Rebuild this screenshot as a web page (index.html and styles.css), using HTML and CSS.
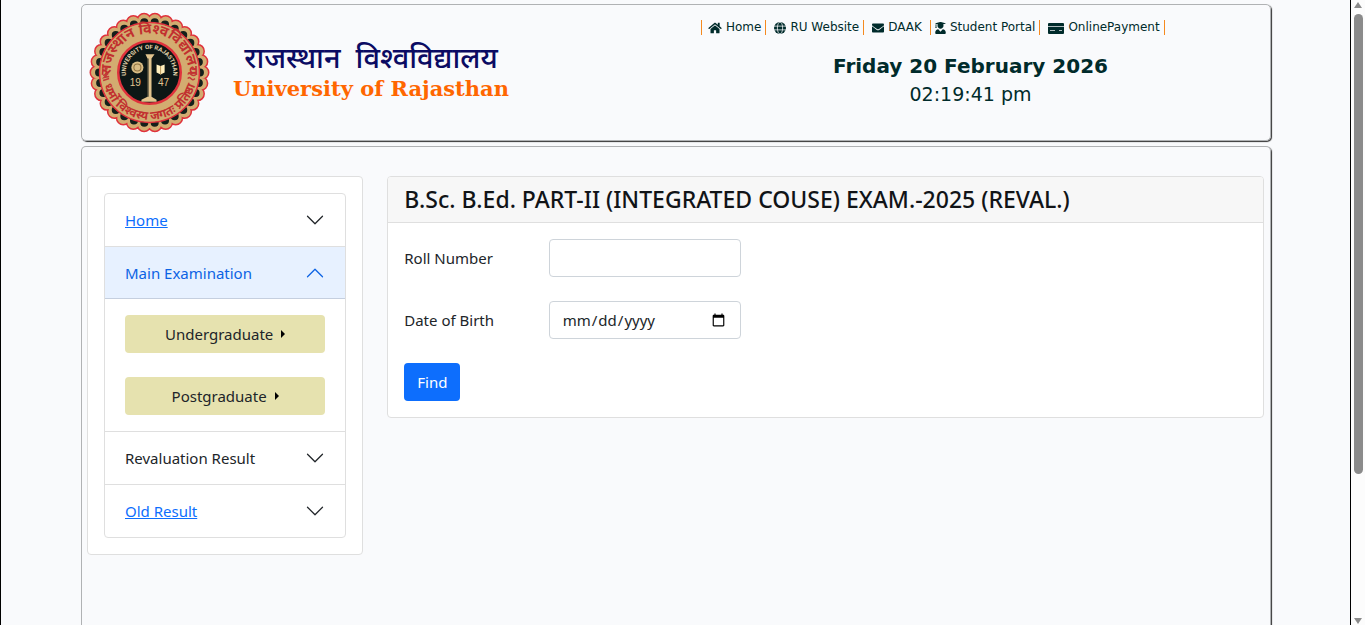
FILE: index.html
```html
<!DOCTYPE html>
<html lang="en">
<head>
  <meta charset="utf-8">
  <meta content="width=device-width, initial-scale=1" name="viewport">
  <title>University of Rajasthan - Result</title>
  <link rel="stylesheet" href="styles.css">
</head>
<body>
  <div class="page">
    <header class="panel header">
      <div class="brand">
        <svg class="seal" viewBox="0 0 120 120" role="img" aria-label="University of Rajasthan seal">
          <defs>
            <path id="ring-top" d="M30 84 A38.500 38.500 0 1 1 90 84"/>
            <path id="ring-bottom" d="M13 60 A47 47 0 0 0 107 60"/>
            <path id="ring-inner" d="M37 65 A23.500 23.500 0 1 1 83 65"/>
          </defs>
          <circle class="lace lace-red" cx="60" cy="60" r="52" pathLength="30"/>
          <circle class="lace lace-gold" cx="60" cy="60" r="52" pathLength="30"/>
          <circle class="lace lace-black" cx="60" cy="60" r="50" pathLength="30"/>
          <circle cx="60" cy="60" r="49.500" fill="#d3ac70" stroke="#e0323c" stroke-width="1.500"/>
          <circle cx="60" cy="60" r="31" fill="#0d1715" stroke="#e0323c" stroke-width="2.500"/>
          <text class="seal-hindi"><textPath href="#ring-top" startOffset="50%">राजस्थान विश्वविद्यालय</textPath></text>
          <text class="seal-hindi seal-motto"><textPath href="#ring-bottom" startOffset="50%">धर्मो विश्वस्य जगतः प्रतिष्ठा</textPath></text>
          <g fill="none" stroke="#c33a38" stroke-width="1.500">
            <path d="M14 63l5-2-4 4 5-1M14 68l6-2M98 62c2-4 4 4 8 0M98 66c2-4 4 4 7 0"/>
          </g>
          <circle cx="17" cy="56" r="1.500" fill="#c33a38"/>
          <circle cx="103" cy="56" r="1.500" fill="#c33a38"/>
          <text class="seal-latin"><textPath href="#ring-inner" startOffset="50%">UNIVERSITY OF RAJASTHAN</textPath></text>
          <circle cx="48" cy="55" r="6" fill="#d9bd85"/>
          <circle cx="48" cy="55" r="3.500" fill="none" stroke="#8f7340"/>
          <path d="M67 52l4 1.500 4-1.500v8l-4 2-4-2z" fill="#fff0bd"/>
          <path d="M71 53.500v8.500" stroke="#b89a5e"/>
          <path d="M56 42h9l-3 4v38l5 3v2H52v-2l6-3V46z" fill="#e2c58e"/>
          <path d="M58.500 46v38" stroke="#0d1715"/>
          <text class="seal-year" x="46" y="73">19</text>
          <text class="seal-year" x="74" y="73">47</text>
        </svg>
        <div class="brand-text">
          <span class="brand-hindi" lang="hi">राजस्थान&nbsp; विश्वविद्यालय</span>
          <span class="brand-english">University of Rajasthan</span>
        </div>
      </div>
      <div class="header-side">
        <nav class="top-nav">
          <a href="#"><svg viewBox="0 0 576 512" width="14" height="12"><path d="M280 148L96 300v164c0 9 7 16 16 16h112c9 0 16-7 16-16v-96c0-9 7-16 16-16h64c9 0 16 7 16 16v96c0 9 7 16 16 16h112c9 0 16-7 16-16V300L296 148c-5-4-11-4-16 0zM572 251l-84-69V44c0-7-5-12-12-12h-56c-7 0-12 5-12 12v72l-89-74c-18-14-43-14-61 0L4 251c-5 5-6 12-2 17l26 31c4 5 12 6 17 2L280 107c5-4 11-4 16 0l235 194c5 4 13 3 17-2l26-31c4-5 3-12-2-17z"/></svg>Home</a>
          <a href="#"><svg viewBox="0 0 16 16" width="12" height="12"><circle cx="8" cy="8" r="8"/><g fill="none" stroke="#f9fafc" stroke-width="1"><ellipse cx="8" cy="8" rx="3.500" ry="8"/><path d="M0 5.500h16M0 10.500h16"/></g></svg>RU Website</a>
          <a class="wide" href="#"><svg viewBox="0 0 512 512" width="12" height="12"><path d="M502 191c4-3 10 0 10 5v204c0 27-21 48-48 48H48c-27 0-48-21-48-48V196c0-5 6-8 10-5 22 17 52 40 155 114 21 16 57 48 91 48s70-33 91-48c103-74 133-97 155-114zM256 320c23 0 57-29 74-42 133-96 143-105 173-129 6-4 9-11 9-19v-18c0-27-21-48-48-48H48c-27 0-48 21-48 48v18c0 8 3 15 9 19 30 24 40 33 173 129 17 13 51 42 74 42z"/></svg>DAAK</a>
          <a class="narrow" href="#"><svg viewBox="0 0 448 512" width="11" height="12"><path d="M320 308l-96 108-96-108C57 311 0 369 0 442v22c0 27 21 48 48 48h352c27 0 48-21 48-48v-22c0-73-57-131-128-134zM14 76l6 2v58c-7 4-12 11-12 20 0 8 5 15 11 19L4 238c-2 7 2 14 8 14h40c6 0 10-7 8-14l-15-63c6-4 11-11 11-19 0-9-5-16-12-20V84l66 16c-9 18-14 38-14 60 0 71 57 128 128 128s128-57 128-128c0-22-5-42-14-60l96-24c18-5 18-19 0-24L244 3c-13-3-27-3-40 0L14 52c-18 5-18 19 0 24z"/></svg>Student Portal</a>
          <a href="#"><svg viewBox="0 0 16 12" width="16" height="12"><path d="M1 1h14q1 0 1 1v9q0 1-1 1H1q-1 0-1-1V2q0-1 1-1z"/><path d="M0 4.500h16M2 8.500h5M11 8.500h3" stroke="#f9fafc" stroke-opacity=".7"/></svg>OnlinePayment</a>
        </nav>
        <div class="clock">
          <div class="clock-date">Friday 20 February 2026</div>
          <div class="clock-time">02:19:41 pm</div>
        </div>
      </div>
    </header>

    <main class="panel content">
      <aside class="card sidebar">
        <div class="accordion">
          <div class="accordion-header">
            <a href="#">Home</a>
            <button type="button" aria-label="Toggle Home"><svg class="chevron" viewBox="0 0 16 16"><path d="M2 5l6 6 6-6"/></svg></button>
          </div>
          <div class="accordion-header active">
            <span>Main Examination</span>
            <button type="button" aria-label="Toggle Main Examination"><svg class="chevron" viewBox="0 0 16 16"><path d="M2 11l6-6 6 6"/></svg></button>
          </div>
          <div class="accordion-body">
            <button class="btn btn-level" type="button">Undergraduate <svg viewBox="0 0 4 8" width="4" height="8"><path d="M0 0l4 4-4 4z"/></svg></button>
            <button class="btn btn-level" type="button">Postgraduate <svg viewBox="0 0 4 8" width="4" height="8"><path d="M0 0l4 4-4 4z"/></svg></button>
          </div>
          <div class="accordion-header">
            <span>Revaluation Result</span>
            <button type="button" aria-label="Toggle Revaluation Result"><svg class="chevron" viewBox="0 0 16 16"><path d="M2 5l6 6 6-6"/></svg></button>
          </div>
          <div class="accordion-header">
            <a href="#">Old Result</a>
            <button type="button" aria-label="Toggle Old Result"><svg class="chevron" viewBox="0 0 16 16"><path d="M2 5l6 6 6-6"/></svg></button>
          </div>
        </div>
      </aside>

      <section class="card result">
        <h1 class="card-header">B.Sc. B.Ed. PART-II (INTEGRATED COUSE) EXAM.-2025 (REVAL.)</h1>
        <form class="card-body">
          <div class="form-row">
            <label for="roll">Roll Number</label>
            <input id="roll" type="text">
          </div>
          <div class="form-row">
            <label for="dob">Date of Birth</label>
            <input id="dob" type="date">
          </div>
          <button class="btn btn-find" type="button">Find</button>
        </form>
      </section>
    </main>
  </div>

  <div class="scrollbar" aria-hidden="true">
    <svg viewBox="0 0 10 8" width="10" height="8"><path d="M5 1L9 7H1z"/></svg>
    <div class="scroll-track"><div class="scroll-thumb"></div></div>
    <svg viewBox="0 0 10 8" width="10" height="8"><path d="M5 7L1 1h8z"/></svg>
  </div>
</body>
</html>
```
FILE: styles.css
```css
* { box-sizing: border-box; }
body { background: #f9fafc; color: #212529; display: flex; font: 15px/24px "Noto Sans", "Open Sans", sans-serif; height: 100vh; margin: 0; overflow: hidden; }
button, input { font: inherit; }
button { cursor: pointer; }

.page { border: solid #000; border-width: 0 1px; display: flex; flex: 1; flex-direction: column; gap: 5px; padding: 4px 79px 0 80px; }
.panel { border: 1px solid #b0b2b4; border-radius: 5px; box-shadow: 1px 1px 1px #333; }

/* Header */
.header { display: grid; grid-template-columns: 1fr 1fr; min-height: 137px; }
.brand { align-items: center; display: flex; gap: 23px; padding-left: 7px; }
.seal { flex: none; height: 121px; width: 121px; }
.brand-text { align-items: center; display: flex; flex-direction: column; padding-bottom: 4px; }
.brand-hindi { color: #0b0b63; font: 500 29px/36px "Noto Sans", "Noto Sans Devanagari", sans-serif; white-space: nowrap; }
.brand-english { color: #ff6600; font: bold 21px/28px "DejaVu Serif", serif; white-space: nowrap; }

.lace { fill: none; stroke-dasharray: 0 1; stroke-linecap: round; }
.lace-red { stroke: #e0323c; stroke-width: 15px; }
.lace-gold { stroke: #d3ac70; stroke-width: 12px; }
.lace-black { stroke: #15201b; stroke-width: 8px; }
.seal text { text-anchor: middle; }
.seal-hindi { fill: #c2302f; font: bold 14px "Noto Sans", sans-serif; }
.seal-motto { font-size: 12px; }
.seal-latin { fill: #e5d6ad; font: bold 6px "Liberation Sans Narrow", Roboto, sans-serif; }
.seal-year { fill: #e2c58e; font: 10px "Liberation Sans", sans-serif; }

.header-side { color: #002b2b; font-family: "DejaVu Sans", sans-serif; padding: 15px 0 0 25px; }
.top-nav { display: flex; }
.top-nav a { align-items: center; border-right: 1px solid #f58a1f; color: inherit; display: flex; font-size: 12px; gap: 4px; line-height: 15px; padding: 0 4px 0 8px; text-decoration: none; white-space: nowrap; }
.top-nav a:first-child { border-left: 1px solid #f58a1f; padding-left: 6px; }
.top-nav a.wide { padding-right: 8px; }
.top-nav a.narrow { padding-left: 4px; }
.top-nav svg { fill: currentColor; flex: none; }
.clock { margin-top: 17px; padding-right: 30px; text-align: center; }
.clock-date { font-size: 20px; font-weight: bold; line-height: 28px; }
.clock-time { font-size: 19px; line-height: 28px; }

/* Content */
.content { align-items: start; border-bottom: 0; border-radius: 5px 5px 0 0; display: grid; flex: 1; gap: 24px; grid-template-columns: repeat(12, 1fr); padding: 29px 6px 0 5px; }
.card { background: #fff; border: 1px solid #dfdfdf; border-radius: 4px; }
.sidebar { grid-column: span 3; padding: 16px; }
.result { grid-column: span 9; }

.accordion { border: 1px solid #dfdfdf; border-radius: 4px; }
.accordion-header { align-items: center; display: flex; height: 53px; justify-content: space-between; padding: 0 20px; }
.accordion-header:first-child { height: 52px; }
.accordion-header + .accordion-header, .accordion-body + .accordion-header { border-top: 1px solid #dfdfdf; }
.accordion-header a { color: #0d6efd; }
.accordion-header.active { background: #e7f1ff; border-bottom: 1px solid #c5cfdf; color: #0c63e4; }
.accordion-header button { background: none; border: 0; color: inherit; display: flex; padding: 0; }
.chevron { fill: none; height: 20px; stroke: currentColor; stroke-linecap: round; stroke-linejoin: round; width: 20px; }
.accordion-body { display: flex; flex-direction: column; gap: 24px; padding: 16px 20px; }

.btn { border: 1px solid transparent; border-radius: 4px; padding: 6px 12px; }
.btn-level { align-items: center; background: #e6e2af; color: #212529; display: flex; gap: 8px; justify-content: center; }
.btn-find { background: #0d6efd; color: #fff; justify-self: start; }

.card-header { background: #f7f7f7; border-bottom: 1px solid #dfdfdf; border-radius: 3px 3px 0 0; color: #111417; font-size: 23px; font-weight: 500; line-height: 29px; margin: 0; padding: 8px 16px; }
.card-body { display: grid; gap: 24px; padding: 16px; }
.form-row { align-items: center; display: grid; gap: 24px; grid-template-columns: repeat(12, 1fr); }
.form-row label { grid-column: span 2; white-space: nowrap; }
.form-row input { background: #fff; border: 1px solid #ced4da; border-radius: 4px; color: #212529; grid-column: span 3; height: 38px; min-width: 0; padding: 6px 12px; width: 100%; }

/* Scrollbar */
.scrollbar { align-items: center; background: #fcfcfc; display: flex; flex-direction: column; gap: 5px; padding-top: 1px; width: 14px; }
.scrollbar svg { fill: #8b8b8b; flex: none; }
.scroll-track { flex: 1; }
.scroll-thumb { background: #8b8b8b; border-radius: 5px; height: 77%; width: 9px; }
```
